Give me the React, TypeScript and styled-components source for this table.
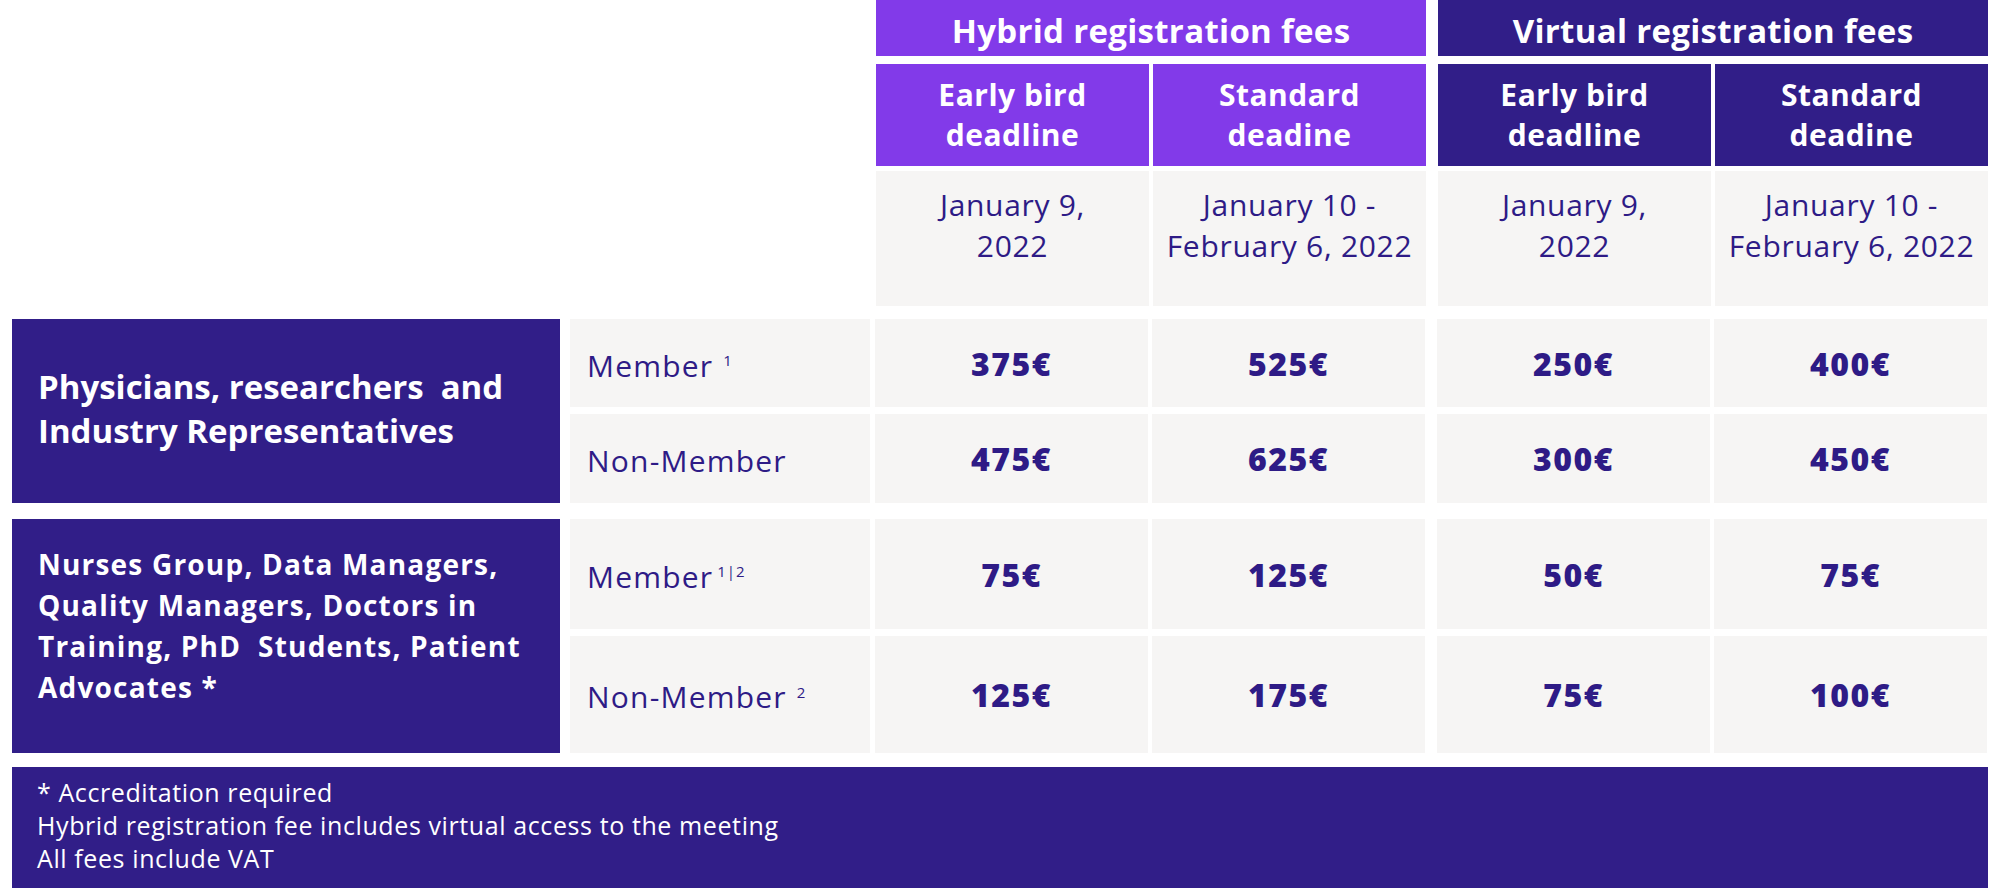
import React from "react";
import styled, { createGlobalStyle } from "styled-components";

const PURPLE = "#823ae9";
const NAVY = "#311e88";
const GREY = "#f6f5f4";
const INK = "#2e1b86";

const GlobalStyle = createGlobalStyle`
  html, body {
    margin: 0;
    padding: 0;
    background: #ffffff;
  }
  body {
    font-family: "Open Sans", "DejaVu Sans", sans-serif;
    color: ${INK};
  }
`;

type Row = { label: string; sup?: string; prices: string[]; h: number };
type Section = {
  lines: string[];
  rows: Row[];
  size: number;
  lh: number;
  spacing: number;
  lift: number;
};

const headGroups = [
  { title: "Hybrid registration fees", tone: PURPLE },
  { title: "Virtual registration fees", tone: NAVY },
];

const deadlines = [
  { name: ["Early bird", "deadline"], date: ["January 9,", "2022"] },
  { name: ["Standard", "deadine"], date: ["January 10 -", "February 6, 2022"] },
];

const sections: Section[] = [
  {
    lines: ["Physicians, researchers\u00a0 and", "Industry Representatives"],
    size: 33,
    lh: 44,
    spacing: 0,
    lift: 4,
    rows: [
      { label: "Member", sup: "1", prices: ["375€", "525€", "250€", "400€"], h: 88 },
      { label: "Non-Member", prices: ["475€", "625€", "300€", "450€"], h: 89 },
    ],
  },
  {
    lines: [
      "Nurses Group, Data Managers,",
      "Quality Managers, Doctors in",
      "Training, PhD\u00a0 Students, Patient",
      "Advocates *",
    ],
    size: 28,
    lh: 41,
    spacing: 1.2,
    lift: 20,
    rows: [
      { label: "Member", sup: "1|2", prices: ["75€", "125€", "50€", "75€"], h: 110 },
      { label: "Non-Member", sup: "2", prices: ["125€", "175€", "75€", "100€"], h: 117 },
    ],
  },
];

export default function App() {
  return (
    <>
      <GlobalStyle />
      <Page>
        <HeadArea>
          <HeadSpacer />
          {headGroups.map((g) => (
            <HeadGroup key={g.title}>
              <GroupTitle $tone={g.tone}>{g.title}</GroupTitle>
              <Pair>
                {deadlines.map((d) => (
                  <SubHead key={d.name[0]} $tone={g.tone}>
                    {d.name[0]}
                    <br />
                    {d.name[1]}
                  </SubHead>
                ))}
              </Pair>
              <Pair>
                {deadlines.map((d) => (
                  <DateCell key={d.name[0]}>
                    {d.date[0]}
                    <br />
                    {d.date[1]}
                  </DateCell>
                ))}
              </Pair>
            </HeadGroup>
          ))}
        </HeadArea>

        {sections.map((s) => (
          <SectionRow key={s.lines[0]}>
            <Category
              $size={s.size}
              $lh={s.lh}
              $spacing={s.spacing}
              $lift={s.lift}
            >
              <div>
                {s.lines.map((l) => (
                  <CatLine key={l}>{l}</CatLine>
                ))}
              </div>
            </Category>
            <RowStack>
              {s.rows.map((r) => (
                <FeeRow key={r.label} $h={r.h}>
                  <LabelCell>
                    {r.label}
                    {r.sup && <Sup $tight={r.sup.length > 1}>{r.sup}</Sup>}
                  </LabelCell>
                  <Pair>
                    <Price>{r.prices[0]}</Price>
                    <Price>{r.prices[1]}</Price>
                  </Pair>
                  <Pair>
                    <Price>{r.prices[2]}</Price>
                    <Price>{r.prices[3]}</Price>
                  </Pair>
                </FeeRow>
              ))}
            </RowStack>
          </SectionRow>
        ))}

        <Footer>
          <div>* Accreditation required</div>
          <div>Hybrid registration fee includes virtual access to the meeting</div>
          <div>All fees include VAT</div>
        </Footer>
      </Page>
    </>
  );
}

const Page = styled.div`
  width: 1976px;
  padding: 0 0 0 12px;
  display: flex;
  flex-direction: column;
`;

const HeadArea = styled.div`
  display: flex;
  gap: 12px;
`;

const HeadSpacer = styled.div`
  width: 852px;
`;

const HeadGroup = styled.div`
  width: 550px;
  display: flex;
  flex-direction: column;
`;

const GroupTitle = styled.div<{ $tone: string }>`
  height: 56px;
  box-sizing: border-box;
  padding-top: 4px;
  background: ${(p) => p.$tone};
  color: #ffffff;
  font-size: 33px;
  font-weight: 700;
  letter-spacing: 0.3px;
  display: flex;
  align-items: center;
  justify-content: center;
  margin-bottom: 8px;
`;

const Pair = styled.div`
  display: grid;
  grid-template-columns: 273px 273px;
  gap: 4px;
`;

const SubHead = styled.div<{ $tone: string }>`
  height: 102px;
  background: ${(p) => p.$tone};
  color: #ffffff;
  font-size: 30px;
  font-weight: 700;
  letter-spacing: 0.5px;
  line-height: 40px;
  text-align: center;
  display: flex;
  align-items: center;
  justify-content: center;
  margin-bottom: 5px;
`;

const DateCell = styled.div`
  height: 135px;
  box-sizing: border-box;
  padding-top: 13px;
  background: ${GREY};
  font-size: 30px;
  font-weight: 500;
  letter-spacing: 0.7px;
  line-height: 41px;
  text-align: center;
`;

const SectionRow = styled.div`
  display: flex;
  gap: 10px;
  margin-top: 13px;

  & + & {
    margin-top: 16px;
  }
`;

const Category = styled.div<{
  $size: number;
  $lh: number;
  $spacing: number;
  $lift: number;
}>`
  width: 548px;
  box-sizing: border-box;
  background: ${NAVY};
  color: #ffffff;
  font-size: ${(p) => p.$size}px;
  line-height: ${(p) => p.$lh}px;
  letter-spacing: ${(p) => p.$spacing}px;
  font-weight: 700;
  display: flex;
  align-items: center;
  padding: 0 0 ${(p) => p.$lift}px 26px;
`;

const CatLine = styled.div`
  white-space: nowrap;
`;

const RowStack = styled.div`
  display: flex;
  flex-direction: column;
  gap: 7px;
`;

const FeeRow = styled.div<{ $h: number }>`
  height: ${(p) => p.$h}px;
  display: flex;
  gap: 5px;

  & > ${Pair} + ${Pair} {
    margin-left: 7px;
  }
`;

const LabelCell = styled.div`
  width: 300px;
  box-sizing: border-box;
  padding: 4px 0 0 17px;
  background: ${GREY};
  font-size: 30px;
  font-weight: 500;
  letter-spacing: 1.2px;
  display: flex;
  align-items: center;
`;

const Sup = styled.span<{ $tight: boolean }>`
  font-size: 15px;
  letter-spacing: 1px;
  margin-left: ${(p) => (p.$tight ? "4px" : "10px")};
  margin-top: -10px;
`;

const Price = styled.div`
  background: ${GREY};
  font-size: 32px;
  font-weight: 800;
  letter-spacing: 1.5px;
  display: flex;
  align-items: center;
  justify-content: center;
`;

const Footer = styled.div`
  margin-top: 14px;
  height: 121px;
  box-sizing: border-box;
  padding: 9px 0 0 25px;
  background: ${NAVY};
  color: #ffffff;
  font-size: 25px;
  letter-spacing: 0.6px;
  line-height: 33px;
`;
